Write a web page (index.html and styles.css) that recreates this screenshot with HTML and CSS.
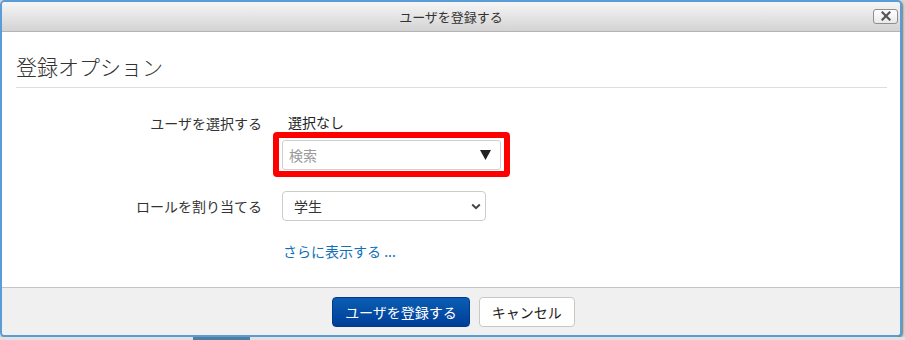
FILE: index.html
```html
<!DOCTYPE html>
<html lang="ja">
<head>
<meta charset="utf-8">
<title>ユーザを登録する</title>
<link rel="stylesheet" href="styles.css">
</head>
<body>
<div class="dialog">
  <div class="titlebar">
    <span></span>
    <span class="title">ユーザを登録する</span>
    <button class="close" aria-label="閉じる">
      <svg width="10" height="10" viewBox="0 0 10 10"><path d="M1.5 1.5 L8.5 8.5 M8.5 1.5 L1.5 8.5" stroke="#555" stroke-width="2.2" stroke-linecap="square" fill="none"/></svg>
    </button>
  </div>
  <div class="content">
    <h3 class="heading">登録オプション</h3>
    <hr class="rule">
    <div class="form">
      <div class="label label-first">ユーザを選択する</div>
      <div class="control">
        <div class="static">選択なし</div>
        <div class="highlight">
          <div class="search">
            <span class="placeholder">検索</span>
            <svg width="11" height="10" viewBox="0 0 11 10"><polygon points="0,0 11,0 5.5,10" fill="#222"/></svg>
          </div>
        </div>
      </div>
      <div class="label label-mid">ロールを割り当てる</div>
      <div class="control">
        <div class="select">
          <span>学生</span>
          <svg width="10" height="7" viewBox="0 0 10 7"><path d="M1.2 1.5 L5 5.2 L8.8 1.5" stroke="#444" stroke-width="2" fill="none"/></svg>
        </div>
      </div>
      <div></div>
      <div class="control"><a class="more" href="#">さらに表示する ...</a></div>
    </div>
  </div>
  <div class="footer">
    <button class="btn btn-primary">ユーザを登録する</button>
    <button class="btn btn-default">キャンセル</button>
  </div>
</div>
<div class="page-strip"><div class="page-block"></div></div>
</body>
</html>
```
FILE: styles.css
```css
html, body {
  margin: 0;
  padding: 0;
}
body {
  width: 905px;
  height: 340px;
  overflow: hidden;
  background: #d6d6d6;
  font-family: "Noto Sans CJK JP", "Noto Sans", sans-serif;
  color: #333;
}
.dialog {
  box-sizing: border-box;
  width: 902px;
  height: 337px;
  border: 2px solid #5b9bd6;
  border-radius: 5px;
  background: #fff;
  display: flex;
  flex-direction: column;
  overflow: hidden;
  box-shadow: 1px 1px 2px rgba(0, 0, 0, 0.45);
}
.titlebar {
  height: 29px;
  border-bottom: 1px solid #b4b4b4;
  background: linear-gradient(#f6f6f6, #d3d3d3);
  display: grid;
  grid-template-columns: 1fr auto 1fr;
  align-items: center;
}
.title {
  font-size: 13px;
  line-height: 16px;
  color: #333;
}
.close {
  justify-self: end;
  margin-right: 2px;
  margin-top: -1px;
  width: 25px;
  height: 15px;
  padding: 0;
  border: 1px solid #8e8e8e;
  border-radius: 3px;
  background: linear-gradient(#ffffff, #e9e9e9);
  display: flex;
  align-items: center;
  justify-content: center;
}
.content {
  flex: 1;
  padding: 20px 13px 0 14px;
}
.heading {
  margin: 0;
  font-size: 21px;
  line-height: 28px;
  font-weight: 300;
  color: #333;
}
.rule {
  margin: 7px 0 0 0;
  border: 0;
  border-top: 1px solid #dedede;
  height: 0;
}
.form {
  margin-top: 24px;
  display: grid;
  grid-template-columns: 246px 1fr;
  column-gap: 20px;
  row-gap: 14px;
  font-size: 14px;
  line-height: 20px;
}
.label {
  text-align: right;
  color: #333;
}
.label-first {
  margin-top: 1px;
}
.label-mid {
  align-self: center;
}
.control {
  display: flex;
  flex-direction: column;
  align-items: flex-start;
}
.static {
  padding-left: 6px;
  color: #222;
}
.highlight {
  margin-left: -9px;
  border: 6px solid #ff0000;
  border-radius: 4px;
  padding: 2px 3px 1px 3px;
}
.search {
  box-sizing: border-box;
  width: 219px;
  height: 30px;
  border: 1px solid #cfcfcf;
  border-radius: 3px;
  background: #fff;
  display: flex;
  align-items: center;
  justify-content: space-between;
  padding: 0 9px 0 6px;
}
.placeholder {
  color: #9a9a9a;
}
.select {
  box-sizing: border-box;
  width: 204px;
  height: 30px;
  border: 1px solid #cccccc;
  border-radius: 4px;
  background: #fff;
  display: flex;
  align-items: center;
  justify-content: space-between;
  padding: 0 4px 0 11px;
  color: #333;
}
.more {
  color: #1070b8;
  text-decoration: none;
  padding-left: 1px;
  margin-top: 6px;
}
.footer {
  height: 48px;
  box-sizing: border-box;
  border-top: 1px solid #c4c4c4;
  background: #f0f0f0;
  display: flex;
  justify-content: center;
  align-items: flex-start;
  gap: 9px;
  padding-top: 9px;
  padding-left: 5px;
}
.btn {
  height: 30px;
  box-sizing: border-box;
  font-family: "Noto Sans CJK JP", "Noto Sans", sans-serif;
  font-size: 14px;
  line-height: 20px;
  border-radius: 4px;
  padding: 0 12px;
}
.btn-primary {
  color: #fff;
  background: linear-gradient(#0b5db3, #003e98);
  border: 1px solid #003a8c;
}
.btn-default {
  color: #222;
  background: #fff;
  border: 1px solid #c8c8c8;
}
.page-strip {
  height: 3px;
  background: #e2e2e2;
}
.page-block {
  margin-left: 193px;
  width: 57px;
  height: 3px;
  background: #4f7f9f;
}
```
